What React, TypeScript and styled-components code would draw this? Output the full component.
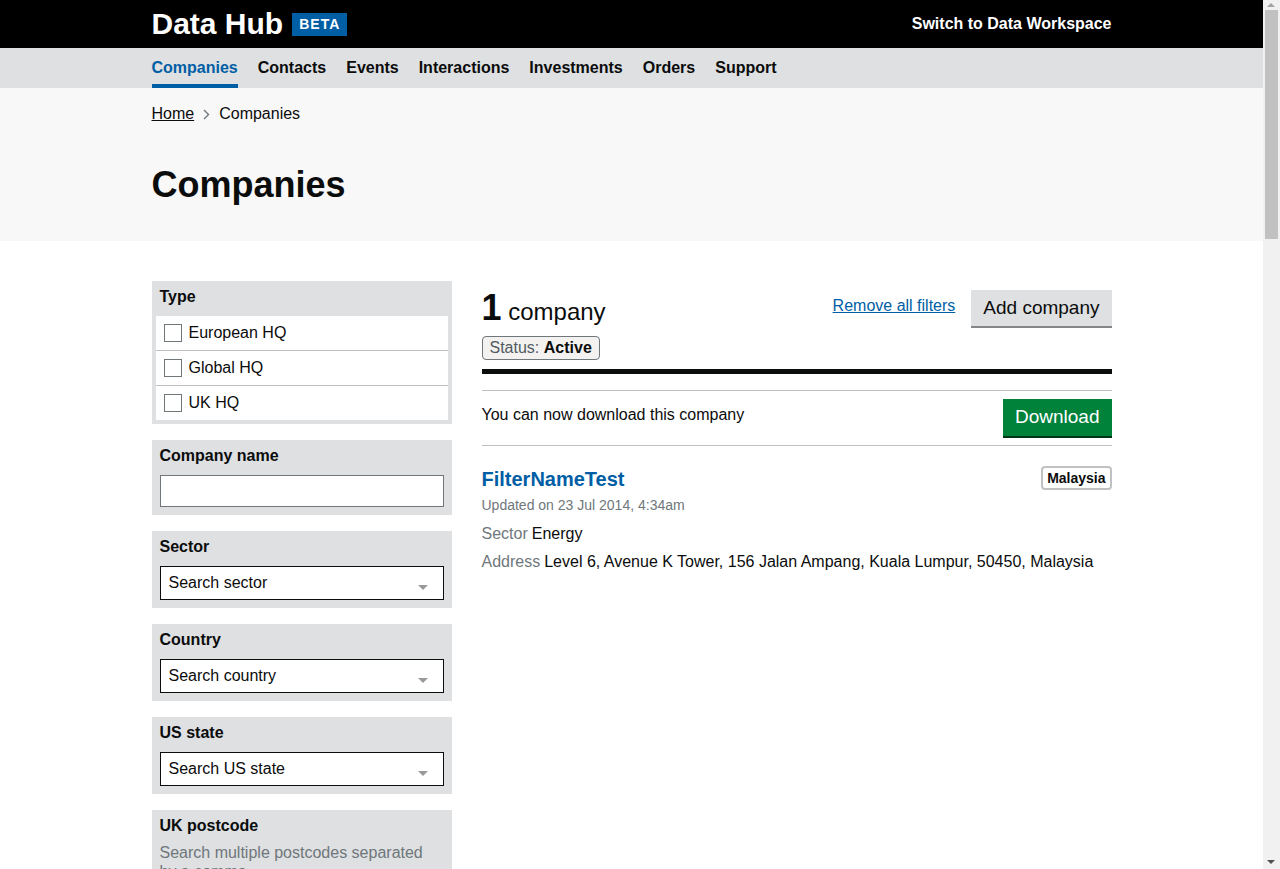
import React from 'react';
import styled, { createGlobalStyle } from 'styled-components';

const GlobalStyle = createGlobalStyle`
    body {
        margin: 0;
        padding-right: 17px;
        background: #fff;
        color: #0b0c0c;
        font-family: "Liberation Sans", Arial, sans-serif;
    }
    *, *::before, *::after {
        box-sizing: border-box;
    }
`;

// the window's scrollbar, drawn over the right edge
const ScrollTrack = styled.div`
    position: fixed;
    top: 0;
    right: 0;
    width: 17px;
    height: 100vh;
    background: #f1f1f1;
    z-index: 20;
`;

const ScrollThumb = styled.div`
    position: absolute;
    top: 10px;
    left: 2px;
    width: 13px;
    height: 229px;
    background: #c1c1c1;
`;

const ScrollArrow = styled.span<{ $down?: boolean }>`
    position: absolute;
    left: 4px;
    width: 0;
    height: 0;
    border-left: 4px solid transparent;
    border-right: 4px solid transparent;
    ${({ $down }) =>
        $down
            ? 'bottom: 5px; border-top: 4px solid #505050;'
            : 'top: 3px; border-bottom: 4px solid #a3a3a3;'}
`;

const Inner = styled.div`
    max-width: 960px;
    margin: 0 auto;
`;

const Masthead = styled.header`
    background: #000;
`;

const MastheadInner = styled(Inner)`
    height: 48px;
    display: flex;
    align-items: center;
    justify-content: space-between;
`;

const Brand = styled.a`
    display: flex;
    align-items: center;
    gap: 9px;
    color: #fff;
    font-size: 30px;
    font-weight: 700;
    line-height: 48px;
    text-decoration: none;
`;

const Beta = styled.span`
    background: #005ea5;
    color: #fff;
    font-size: 14px;
    line-height: 19px;
    padding: 2px 7px;
    letter-spacing: 1px;
`;

const SwitchLink = styled.a`
    color: #fff;
    font-size: 16px;
    font-weight: 700;
    text-decoration: none;
    margin-top: -1px;
`;

const NavBar = styled.nav`
    background: #dee0e2;
`;

const NavList = styled(Inner)`
    display: flex;
    gap: 20px;
`;

const NavItem = styled.a<{ $active?: boolean }>`
    display: block;
    height: 40px;
    line-height: 40px;
    font-size: 16px;
    font-weight: 700;
    text-decoration: none;
    color: ${({ $active }) => ($active ? '#005ea5' : '#0b0c0c')};
    box-shadow: ${({ $active }) => ($active ? 'inset 0 -4px 0 #005ea5' : 'none')};
`;

const LocalHeader = styled.div`
    background: #f8f8f8;
    padding: 16px 0 36px;
`;

const Breadcrumbs = styled.div`
    display: flex;
    align-items: center;
    gap: 9px;
    font-size: 16px;
    line-height: 20px;
`;

const Crumb = styled.a`
    color: #0b0c0c;
    text-decoration: underline;
`;

const Title = styled.h1`
    margin: 41px 0 0;
    font-size: 36px;
    line-height: 40px;
    font-weight: 700;
`;

const Layout = styled(Inner)`
    display: grid;
    grid-template-columns: 300px 630px;
    column-gap: 30px;
    align-items: start;
    padding-top: 40px;
    min-height: 2929px;
`;

const Sidebar = styled.aside`
    display: flex;
    flex-direction: column;
    gap: 16px;
`;

const FilterGroup = styled.div<{ $tight?: boolean }>`
    background: #dee0e2;
    padding: ${({ $tight }) => ($tight ? '6px 8px 4px' : '6px 8px 8px')};
`;

const FilterLabel = styled.div`
    font-size: 16px;
    font-weight: 700;
    line-height: 20px;
    margin-bottom: 9px;
`;

const Hint = styled.div`
    color: #6f777b;
    font-size: 16px;
    line-height: 19px;
    margin: -2px 0 8px;
`;

const OptionList = styled.div`
    margin: 0 -4px;
    background: #fff;
`;

const Option = styled.label`
    display: flex;
    align-items: center;
    gap: 7px;
    height: 35px;
    padding: 0 8px;
    font-size: 16px;
    border-bottom: 1px solid #bfc1c3;

    &:last-child {
        height: 34px;
        border-bottom: none;
    }
`;

const Box = styled.span`
    width: 18px;
    height: 18px;
    border: 1px solid #6f777b;
    background: #fff;
`;

const TextInput = styled.div`
    height: 32px;
    background: #fff;
    border: 1px solid #6f777b;
`;

const Select = styled.div`
    position: relative;
    height: 34px;
    display: flex;
    align-items: center;
    padding: 0 8px;
    background: #fff;
    border: 1px solid #0b0c0c;
    font-size: 16px;
`;

const Caret = styled.span`
    position: absolute;
    right: 15px;
    top: 18px;
    width: 0;
    height: 0;
    border-left: 5px solid transparent;
    border-right: 5px solid transparent;
    border-top: 5px solid #999;
`;

const Results = styled.main`
    padding-top: 9px;
`;

const ResultsHeader = styled.div`
    display: flex;
    justify-content: space-between;
    align-items: flex-start;
`;

const Count = styled.h2`
    margin: 0;
    height: 36px;
    font-size: 24px;
    font-weight: 400;
    line-height: 36px;
`;

const CountNumber = styled.span`
    font-size: 36px;
    font-weight: 700;
`;

const Actions = styled.div`
    display: flex;
    align-items: flex-start;
    gap: 16px;
`;

const TextLink = styled.a`
    margin-top: 6px;
    color: #005ea5;
    font-size: 16px;
    line-height: 20px;
    text-decoration: underline;
`;

const Button = styled.button<{ $primary?: boolean }>`
    border: none;
    border-radius: 0;
    margin: 0 0 2px;
    padding: ${({ $primary }) => ($primary ? '6px 12px 7px' : '6px 12px')};
    font-family: inherit;
    font-size: 19px;
    line-height: 24px;
    cursor: pointer;
    color: ${({ $primary }) => ($primary ? '#fff' : '#0b0c0c')};
    background: ${({ $primary }) => ($primary ? '#00823b' : '#dee0e2')};
    box-shadow: 0 2px 0 ${({ $primary }) => ($primary ? '#003618' : '#858688')};
`;

const Tags = styled.div`
    display: flex;
    margin-top: 8px;
    height: 24px;
`;

const StatusTag = styled.span`
    height: 24px;
    padding: 0 7px;
    border: 1px solid #6f777b;
    border-radius: 4px;
    background: #f3f2f1;
    font-size: 16px;
    line-height: 22px;
    color: #505a5f;

    strong {
        color: #0b0c0c;
    }
`;

const HeavyRule = styled.div`
    margin-top: 9px;
    height: 5px;
    background: #0b0c0c;
`;

const DownloadRow = styled.div`
    margin-top: 16px;
    display: flex;
    justify-content: space-between;
    align-items: flex-start;
    padding: 8px 0 7px;
    border-top: 1px solid #bfc1c3;
    border-bottom: 1px solid #bfc1c3;
    font-size: 16px;
    line-height: 20px;
`;

const DownloadText = styled.p`
    margin: 6px 0 0;
`;

const Item = styled.article`
    padding-top: 21px;
`;

const ItemHead = styled.div`
    display: flex;
    justify-content: space-between;
    align-items: flex-start;
`;

const ItemTitle = styled.a`
    color: #005ea5;
    font-size: 20px;
    font-weight: 700;
    line-height: 24px;
    text-decoration: none;
`;

const Badge = styled.span`
    margin-top: -1px;
    border: 2px solid #bfc1c3;
    border-radius: 4px;
    padding: 0 4px;
    font-size: 14px;
    font-weight: 700;
    line-height: 20px;
`;

const Updated = styled.div`
    margin-top: 4px;
    color: #6f777b;
    font-size: 14px;
    line-height: 20px;
`;

const Details = styled.dl`
    margin: 5px 0 0;
    font-size: 16px;
    line-height: 28px;
`;

const DetailRow = styled.div`
    display: flex;
    gap: 4px;
`;

const Dt = styled.dt`
    color: #6f777b;
`;

const Dd = styled.dd`
    margin: 0;
`;

const Chevron = () => (
    <svg width="7" height="11" viewBox="0 0 7 11">
        <polyline points="1,1 5.5,5.5 1,10" fill="none" stroke="#6f777b" strokeWidth="1.4" />
    </svg>
);

const NAV = ['Companies', 'Contacts', 'Events', 'Interactions', 'Investments', 'Orders', 'Support'];

const SELECTS = [
    { label: 'Sector', placeholder: 'Search sector' },
    { label: 'Country', placeholder: 'Search country' },
    { label: 'US state', placeholder: 'Search US state' },
];

const MORE_SELECTS = [
    { label: 'UK region', placeholder: 'Search UK region' },
    { label: 'Currently exporting to', placeholder: 'Search country' },
    { label: 'Future countries of interest', placeholder: 'Search country' },
    { label: 'Lead ITA or Global Account Manager', placeholder: 'Search adviser' },
];

const App = () => {
    return (
        <>
            <GlobalStyle />
            <ScrollTrack>
                <ScrollArrow />
                <ScrollThumb />
                <ScrollArrow $down />
            </ScrollTrack>

            <Masthead>
                <MastheadInner>
                    <Brand href="#">
                        Data Hub <Beta>BETA</Beta>
                    </Brand>
                    <SwitchLink href="#">Switch to Data Workspace</SwitchLink>
                </MastheadInner>
            </Masthead>

            <NavBar>
                <NavList>
                    {NAV.map((item, index) => (
                        <NavItem key={item} href="#" $active={index === 0}>
                            {item}
                        </NavItem>
                    ))}
                </NavList>
            </NavBar>

            <LocalHeader>
                <Inner>
                    <Breadcrumbs>
                        <Crumb href="#">Home</Crumb>
                        <Chevron />
                        <span>Companies</span>
                    </Breadcrumbs>
                    <Title>Companies</Title>
                </Inner>
            </LocalHeader>

            <Layout>
                <Sidebar>
                    <FilterGroup $tight>
                        <FilterLabel>Type</FilterLabel>
                        <OptionList>
                            {['European HQ', 'Global HQ', 'UK HQ'].map((option) => (
                                <Option key={option}>
                                    <Box />
                                    {option}
                                </Option>
                            ))}
                        </OptionList>
                    </FilterGroup>

                    <FilterGroup>
                        <FilterLabel>Company name</FilterLabel>
                        <TextInput />
                    </FilterGroup>

                    {SELECTS.map((select) => (
                        <FilterGroup key={select.label}>
                            <FilterLabel>{select.label}</FilterLabel>
                            <Select>
                                {select.placeholder}
                                <Caret />
                            </Select>
                        </FilterGroup>
                    ))}

                    <FilterGroup>
                        <FilterLabel>UK postcode</FilterLabel>
                        <Hint>Search multiple postcodes separated by a comma</Hint>
                        <TextInput />
                    </FilterGroup>

                    {MORE_SELECTS.map((select) => (
                        <FilterGroup key={select.label}>
                            <FilterLabel>{select.label}</FilterLabel>
                            <Select>
                                {select.placeholder}
                                <Caret />
                            </Select>
                        </FilterGroup>
                    ))}
                </Sidebar>

                <Results>
                    <ResultsHeader>
                        <Count>
                            <CountNumber>1</CountNumber> company
                        </Count>
                        <Actions>
                            <TextLink href="#">Remove all filters</TextLink>
                            <Button>Add company</Button>
                        </Actions>
                    </ResultsHeader>

                    <Tags>
                        <StatusTag>
                            Status: <strong>Active</strong>
                        </StatusTag>
                    </Tags>

                    <HeavyRule />

                    <DownloadRow>
                        <DownloadText>You can now download this company</DownloadText>
                        <Button $primary>Download</Button>
                    </DownloadRow>

                    <Item>
                        <ItemHead>
                            <ItemTitle href="#">FilterNameTest</ItemTitle>
                            <Badge>Malaysia</Badge>
                        </ItemHead>
                        <Updated>Updated on 23 Jul 2014, 4:34am</Updated>
                        <Details>
                            <DetailRow>
                                <Dt>Sector</Dt>
                                <Dd>Energy</Dd>
                            </DetailRow>
                            <DetailRow>
                                <Dt>Address</Dt>
                                <Dd>Level 6, Avenue K Tower, 156 Jalan Ampang, Kuala Lumpur, 50450, Malaysia</Dd>
                            </DetailRow>
                        </Details>
                    </Item>
                </Results>
            </Layout>
        </>
    );
};

export default App;
